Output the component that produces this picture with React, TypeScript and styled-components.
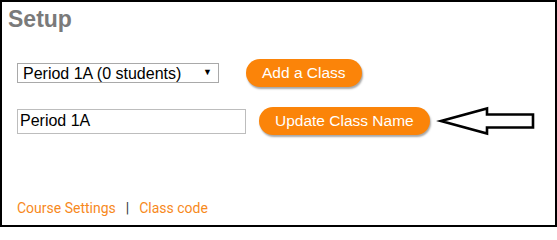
import * as React from 'react';
import styled, { createGlobalStyle } from 'styled-components';

const GlobalStyle = createGlobalStyle`
    html, body {
        margin: 0;
        padding: 0;
        background: #ffffff;
    }
    * {
        box-sizing: border-box;
    }
`;

const Frame = styled.div`
    width: 557px;
    height: 227px;
    border: 2px solid #000000;
    background: #ffffff;
    display: flex;
    flex-direction: column;
    font-family: 'Liberation Sans', Arial, sans-serif;
`;

const Title = styled.h1`
    margin: 4px 0 0 6px;
    font-size: 23px;
    line-height: 26px;
    font-weight: bold;
    color: #7a7a7a;
`;

const Form = styled.div`
    display: flex;
    flex-direction: column;
    gap: 18px;
    margin-top: 27px;
    padding-left: 15px;
`;

const Row = styled.div`
    display: flex;
    align-items: center;
`;

const SelectWrap = styled.span`
    position: relative;
    display: inline-block;
`;

const Select = styled.select`
    appearance: none;
    width: 202px;
    height: 20px;
    border: 1px solid #a9a9a9;
    border-radius: 0;
    background: #ffffff;
    padding: 0 0 0 5px;
    font-family: 'Liberation Sans', Arial, sans-serif;
    font-size: 16px;
    color: #000000;
    outline: none;
`;

const Caret = styled.span`
    position: absolute;
    right: 7px;
    top: 4px;
    font-size: 9px;
    line-height: 10px;
    color: #000000;
    pointer-events: none;
`;

const TextInput = styled.input`
    width: 229px;
    height: 25px;
    border: 1px solid #bdbdbd;
    padding: 0 0 0 2px;
    font-family: 'Liberation Sans', Arial, sans-serif;
    font-size: 16px;
    color: #000000;
    outline: none;
`;

const OrangeButton = styled.button<{ $offset: number }>`
    margin-left: ${p => p.$offset}px;
    height: 28px;
    padding: 0 16px;
    border: none;
    border-radius: 14px;
    background: #fb8409;
    color: #ffffff;
    font-family: 'Liberation Sans', Arial, sans-serif;
    font-size: 15.5px;
    box-shadow: 1px 2px 2px rgba(0, 0, 0, 0.35);
    cursor: pointer;
`;

const Arrow = styled.svg`
    margin-left: 6px;
    display: block;
`;

const Footer = styled.div`
    margin-top: auto;
    padding: 0 0 9px 15px;
    font-family: Roboto, 'Liberation Sans', sans-serif;
    font-size: 14px;
    line-height: 16px;
    color: #333333;
    display: flex;
    gap: 10px;
`;

const FooterLink = styled.a`
    color: #f7891c;
    text-decoration: none;
`;

export default function App() {
    const [className, setClassName] = React.useState('Period 1A');
    return (
        <>
            <GlobalStyle />
            <Frame>
                <Title>Setup</Title>
                <Form>
                    <Row>
                        <SelectWrap>
                            <Select defaultValue="p1a">
                                <option value="p1a">Period 1A (0 students)</option>
                            </Select>
                            <Caret>▼</Caret>
                        </SelectWrap>
                        <OrangeButton $offset={27}>Add a Class</OrangeButton>
                    </Row>
                    <Row>
                        <TextInput value={className} onChange={e => setClassName(e.target.value)} />
                        <OrangeButton $offset={13}>Update Class Name</OrangeButton>
                        <Arrow width="102" height="32" viewBox="0 0 102 32">
                            <polygon
                                points="5,16 51,3.5 51,9.5 97,9.5 97,22.5 51,22.5 51,28.5"
                                fill="#ffffff"
                                stroke="#000000"
                                strokeWidth="2.6"
                                strokeLinejoin="miter"
                            />
                        </Arrow>
                    </Row>
                </Form>
                <Footer>
                    <FooterLink href="#">Course Settings</FooterLink>
                    <span>|</span>
                    <FooterLink href="#">Class code</FooterLink>
                </Footer>
            </Frame>
        </>
    );
}
